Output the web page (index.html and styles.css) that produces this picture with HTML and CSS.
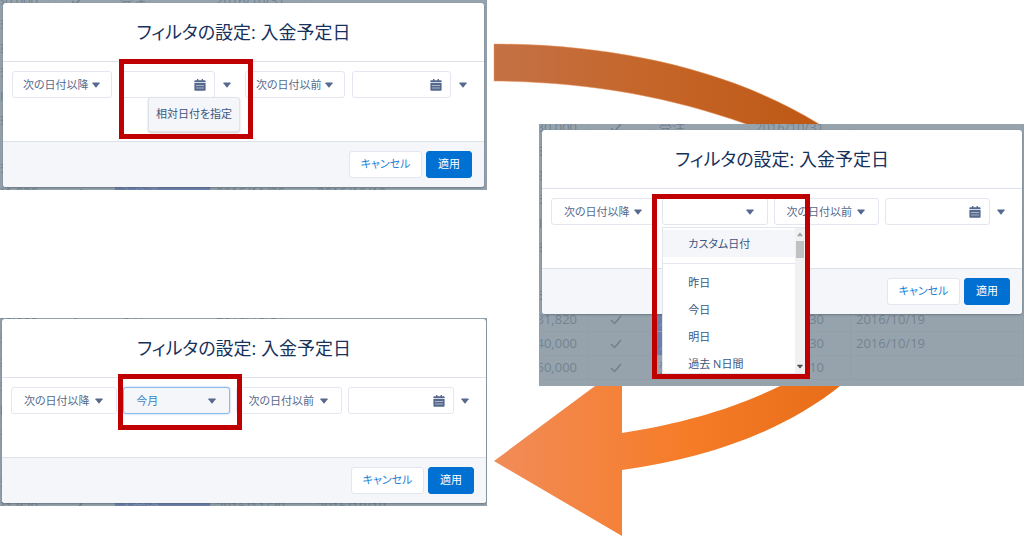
FILE: index.html
```
<!DOCTYPE html>
<html lang="ja">
<head>
    <meta charset="UTF-8">
    <meta name="viewport" content="width=device-width, initial-scale=1.0">
    <title>フィルタの設定: 入金予定日</title>
    <link rel="stylesheet" href="styles.css">
</head>
<body>

<svg class="symbols" aria-hidden="true">
    <symbol id="calendar" viewBox="0 0 12 12">
        <path d="M3 0h1.4v1.2h3.2V0H9v1.2h1.6c.6 0 1 .4 1 1v1H.4v-1c0-.6.4-1 1-1H3z"/>
        <path fill-rule="evenodd" d="M.4 4h11.2v6.800c0 .6-.4 1-1 1H1.400c-.6 0-1-.4-1-1zM2.500 6v1h1V6zm2 0v1h1V6zm2 0v1h1V6zm2 0v1h1V6zm-6 2.500v1h1v-1zm2 0v1h1v-1zm2 0v1h1v-1zm2 0v1h1v-1z"/>
    </symbol>
    <symbol id="caret" viewBox="0 0 8 6">
        <path d="M.8.6h6.400c.4 0 .6.4.4.7L4.500 5.200c-.3.300-.7.300-1 0L.4 1.300C.2 1 .4.6.8.6z"/>
    </symbol>
</svg>

<main class="stage">
    <svg class="arrow" viewBox="0 0 1024 537" aria-hidden="true">
        <defs>
            <linearGradient id="upper" gradientUnits="userSpaceOnUse" x1="494" y1="0" x2="820" y2="0">
                <stop offset="0" stop-color="#c47145"/>
                <stop offset="0.5" stop-color="#c56528"/>
                <stop offset="1" stop-color="#be5815"/>
            </linearGradient>
            <linearGradient id="lower" gradientUnits="userSpaceOnUse" x1="494" y1="0" x2="840" y2="0">
                <stop offset="0" stop-color="#f18c58"/>
                <stop offset="0.55" stop-color="#f67c28"/>
                <stop offset="1" stop-color="#e86d18"/>
            </linearGradient>
        </defs>
        <path fill="url(#upper)" stroke="#e9945f" stroke-width="0.5" d="M494 44C620 44 735 72 819 124L840 140H790L746 124C670 97 590 82 494 81z"/>
        <path fill="url(#lower)" d="M494 461L622 366V433C685 423 735 408 780 386L800 370H860L840 386C785 430 710 458 622 470V536z"/>
    </svg>

    <div class="column">
        <section class="shot shot-calendar">
            <table class="records" data-rows="9" aria-hidden="true"></table>
            <form class="modal">
                <h2>フィルタの設定: 入金予定日</h2>
                <div class="filters">
                    <div class="field">
                        <select aria-label="開始条件"><option>次の日付以降</option></select>
                        <svg class="caret"><use href="#caret"/></svg>
                    </div>
                    <div class="date-group">
                        <div class="field">
                            <input type="text" aria-label="開始日">
                            <svg class="calendar"><use href="#calendar"/></svg>
                        </div>
                        <button type="button" class="more" aria-label="開始日のオプション"><svg><use href="#caret"/></svg></button>
                        <button type="button" class="hint">相対日付を指定</button>
                        <div class="mark"></div>
                    </div>
                    <div class="field">
                        <select aria-label="終了条件"><option>次の日付以前</option></select>
                        <svg class="caret"><use href="#caret"/></svg>
                    </div>
                    <div class="field">
                        <input type="text" aria-label="終了日">
                        <svg class="calendar"><use href="#calendar"/></svg>
                    </div>
                    <button type="button" class="more" aria-label="終了日のオプション"><svg><use href="#caret"/></svg></button>
                </div>
                <footer>
                    <button type="button" class="cancel">キャンセル</button>
                    <button type="button" class="apply">適用</button>
                </footer>
            </form>
        </section>

        <section class="shot shot-result">
            <table class="records" data-rows="9" aria-hidden="true"></table>
            <form class="modal">
                <h2>フィルタの設定: 入金予定日</h2>
                <div class="filters">
                    <div class="field">
                        <select aria-label="開始条件"><option>次の日付以降</option></select>
                        <svg class="caret"><use href="#caret"/></svg>
                    </div>
                    <div class="field">
                        <select class="active" aria-label="開始日"><option>今月</option></select>
                        <svg class="caret"><use href="#caret"/></svg>
                        <div class="mark"></div>
                    </div>
                    <div class="field">
                        <select aria-label="終了条件"><option>次の日付以前</option></select>
                        <svg class="caret"><use href="#caret"/></svg>
                    </div>
                    <div class="field">
                        <input type="text" aria-label="終了日">
                        <svg class="calendar"><use href="#calendar"/></svg>
                    </div>
                    <button type="button" class="more" aria-label="終了日のオプション"><svg><use href="#caret"/></svg></button>
                </div>
                <footer>
                    <button type="button" class="cancel">キャンセル</button>
                    <button type="button" class="apply">適用</button>
                </footer>
            </form>
        </section>
    </div>

    <div class="column column-right">
        <section class="shot shot-menu">
            <table class="records" data-rows="11" aria-hidden="true"></table>
            <form class="modal">
                <h2>フィルタの設定: 入金予定日</h2>
                <div class="filters">
                    <div class="field">
                        <select aria-label="開始条件"><option>次の日付以降</option></select>
                        <svg class="caret"><use href="#caret"/></svg>
                    </div>
                    <div class="field">
                        <select aria-label="開始日"><option></option></select>
                        <svg class="caret"><use href="#caret"/></svg>
                        <div class="menu">
                            <ul>
                                <li class="current">カスタム日付</li>
                                <li class="divider"></li>
                                <li>昨日</li>
                                <li>今日</li>
                                <li>明日</li>
                                <li>過去 N日間</li>
                            </ul>
                            <div class="scrollbar">
                                <svg class="up"><use href="#caret"/></svg>
                                <div class="thumb"></div>
                                <svg class="down"><use href="#caret"/></svg>
                            </div>
                        </div>
                        <div class="mark"></div>
                    </div>
                    <div class="field">
                        <select aria-label="終了条件"><option>次の日付以前</option></select>
                        <svg class="caret"><use href="#caret"/></svg>
                    </div>
                    <div class="field">
                        <input type="text" aria-label="終了日">
                        <svg class="calendar"><use href="#calendar"/></svg>
                    </div>
                    <button type="button" class="more" aria-label="終了日のオプション"><svg><use href="#caret"/></svg></button>
                </div>
                <footer>
                    <button type="button" class="cancel">キャンセル</button>
                    <button type="button" class="apply">適用</button>
                </footer>
            </form>
        </section>
    </div>
</main>

<script src="script.js"></script>
</body>
</html>
```
FILE: styles.css
```
* {
    box-sizing: border-box;
}
body {
    margin: 0;
    background-color: #fff;
    color: #16325c;
    font-family: "Open Sans", "Noto Sans CJK JP", sans-serif;
    font-size: 11px;
    font-feature-settings: "palt";
}
h2, ul {
    margin: 0;
    padding: 0;
}
button, input, select {
    font: inherit;
    font-feature-settings: inherit;
    color: #54698d;
    margin: 0;
}
.symbols {
    position: absolute;
    width: 0;
    height: 0;
}
.stage {
    position: relative;
    display: grid;
    grid-template-columns: minmax(0, 487fr) minmax(0, 485fr);
    gap: 52px;
    padding-bottom: 31px;
}
.arrow {
    position: absolute;
    top: 0;
    left: 0;
    width: 100%;
}
.column {
    display: flex;
    flex-direction: column;
    gap: 128px;
}
.column-right {
    padding-top: 124px;
}

/* dimmed list behind each dialog */
.shot {
    position: relative;
    overflow: hidden;
    background-color: #96a3ad;
}
.shot-calendar {
    padding: 3px;
}
.shot-result {
    padding: 1px 1px 3px 2px;
}
.shot-menu {
    padding: 6px 2px 72px 3px;
}
.records {
    position: absolute;
    top: -12px;
    left: 0;
    width: 100%;
    table-layout: fixed;
    border-collapse: collapse;
    color: #748391;
    font-size: 13px;
    line-height: 23px;
    white-space: nowrap;
}
.shot-result .records {
    top: -16px;
}
.shot-menu .records {
    top: -9px;
}
.records td {
    height: 24px;
    padding: 0 5px;
    border: 1px solid #929fa9;
    overflow: hidden;
}
.records td:nth-child(1) {
    width: 48px;
    padding: 0 10px 0 0;
    direction: rtl;
}
.records td:nth-child(2) {
    width: 66px;
    padding-left: 22px;
}
.records td:nth-child(3) {
    width: 96px;
}
.records td:nth-child(4) {
    width: 101px;
}
.records td.won {
    background-color: #6c7fa9;
    color: #8796b6;
}
.records svg {
    display: block;
    width: 12px;
    height: 10px;
    fill: none;
    stroke: #6f7f8e;
    stroke-width: 1.4;
}

.modal {
    position: relative;
    background-color: #fff;
    border-radius: 3px;
    box-shadow: 0 1px 2px rgba(60, 75, 90, 0.5);
}
.modal h2 {
    padding: 16px 0;
    border-bottom: 1px solid #dde1ea;
    font-size: 18px;
    font-weight: 400;
    line-height: 26px;
    text-align: center;
}
.filters {
    display: flex;
    gap: 6px;
    padding: 9px 10px 43px 9px;
}
.shot-calendar .filters {
    gap: 7px;
}
.field {
    position: relative;
    flex: 1;
    min-width: 0;
}
.date-group {
    position: relative;
    display: flex;
    flex: 1 1 20px;
    gap: 4px;
    padding-right: 3px;
}
.field select, .field input {
    display: block;
    width: 100%;
    height: 27px;
    padding: 0 12px 1px;
    border: 1px solid #e3e6ee;
    border-radius: 3px;
    background-color: #fff;
    appearance: none;
    outline: none;
}
.shot-calendar .field select {
    padding: 0 0 1px 10px;
}
.field select.active {
    border-color: #8dbce8;
    background-color: #f4f6f9;
    box-shadow: 0 0 2px #8dbce8;
    color: #3a85c8;
}
.caret, .calendar {
    position: absolute;
    top: 11px;
    right: 14px;
    width: 8px;
    height: 6px;
    fill: #54698d;
    pointer-events: none;
}
.shot-calendar .caret {
    right: 12px;
}
.calendar {
    top: 8px;
    right: 9px;
    width: 12px;
    height: 12px;
}
.more {
    display: flex;
    align-items: center;
    justify-content: center;
    width: 16px;
    height: 27px;
    padding: 0;
    border: 0;
    background: none;
}
.filters > .more {
    margin: 0 3px 0 -3px;
}
.more svg {
    width: 8px;
    height: 6px;
    fill: #54698d;
}
.hint {
    position: absolute;
    top: 26px;
    right: -2px;
    width: 92px;
    height: 35px;
    padding: 0 0 3px;
    border: 1px solid #dfe3ea;
    border-radius: 3px;
    background-color: #f4f6f9;
    box-shadow: 0 1px 2px rgba(0, 0, 0, 0.2);
    color: #3c5580;
    white-space: nowrap;
    z-index: 1;
}

footer {
    display: flex;
    justify-content: flex-end;
    gap: 4px;
    padding: 9px 12px;
    border-top: 1px solid #dde1ea;
    border-radius: 0 0 3px 3px;
    background-color: #f4f6f9;
}
footer button {
    width: 73px;
    height: 27px;
    padding: 0 0 3px;
    border: 1px solid #e3e6ee;
    border-radius: 3px;
    background-color: #fff;
    color: #1b83d8;
}
footer .apply {
    width: 46px;
    border-color: #0070d2;
    background-color: #0070d2;
    color: #fff;
}

/* red frames */
.mark {
    position: absolute;
    border: 5px solid #c00000;
    z-index: 2;
    pointer-events: none;
}
.shot-calendar .mark {
    top: -12px;
    right: -15px;
    bottom: -41px;
    left: 0;
}
.shot-result .mark {
    top: -13px;
    right: -12px;
    bottom: -16px;
    left: -5px;
}
.shot-menu .mark {
    top: -4px;
    right: -42px;
    left: -10px;
    height: 185px;
}

.menu {
    position: absolute;
    top: 29px;
    right: -38px;
    left: 0;
    display: flex;
    height: 147px;
    border: 1px solid #e3e6ee;
    background-color: #fff;
    z-index: 1;
}
.menu ul {
    flex: 1;
    padding-top: 2px;
    list-style: none;
}
.menu li {
    padding-left: 25px;
    color: #3c5580;
    line-height: 27px;
}
.menu .current {
    background-color: #f4f6f9;
}
.menu .divider {
    height: 1px;
    margin: 6px 0 5px;
    background-color: #e3e6ee;
}
.scrollbar {
    display: flex;
    flex-direction: column;
    align-items: center;
    width: 10px;
    padding: 4px 0;
    background-color: #f1f1f1;
}
.scrollbar svg {
    width: 6px;
    height: 5px;
    fill: #505050;
}
.scrollbar .up {
    fill: #a3a3a3;
    transform: rotate(180deg);
}
.scrollbar .down {
    margin-top: auto;
}
.thumb {
    width: 8px;
    height: 17px;
    margin-top: 4px;
    background-color: #c1c1c1;
}
```
FILE: script.js
```
const records = [
    ['30,000', '受注', '2016/10/31', ''],
    ['50,000', '', '', ''],
    ['24,000', '', '', ''],
    ['65,000', '', '', ''],
    ['15,000', '', '', ''],
    ['30,000', '', '', ''],
    ['', '', '', ''],
    ['60,000', '', '', ''],
    ['31,820', '入金済', '2016/11/30', '2016/10/19'],
    ['40,000', '入金済', '2016/11/30', '2016/10/19'],
    ['50,000', '受注', '2016/11/10', '']
];

const check = '<svg viewBox="0 0 12 10"><path d="M1 5l3.500 3.500L11 1"/></svg>';

document.querySelectorAll('.records').forEach(table => {
    table.innerHTML = records.slice(0, table.dataset.rows).map(([amount, stage, due, paid]) => {
        const won = stage === '入金済' ? 'won' : '';
        return `<tr><td>${amount}</td><td>${check}</td><td class="${won}">${stage}</td><td>${due}</td><td>${paid}</td></tr>`;
    }).join('');
});
```
